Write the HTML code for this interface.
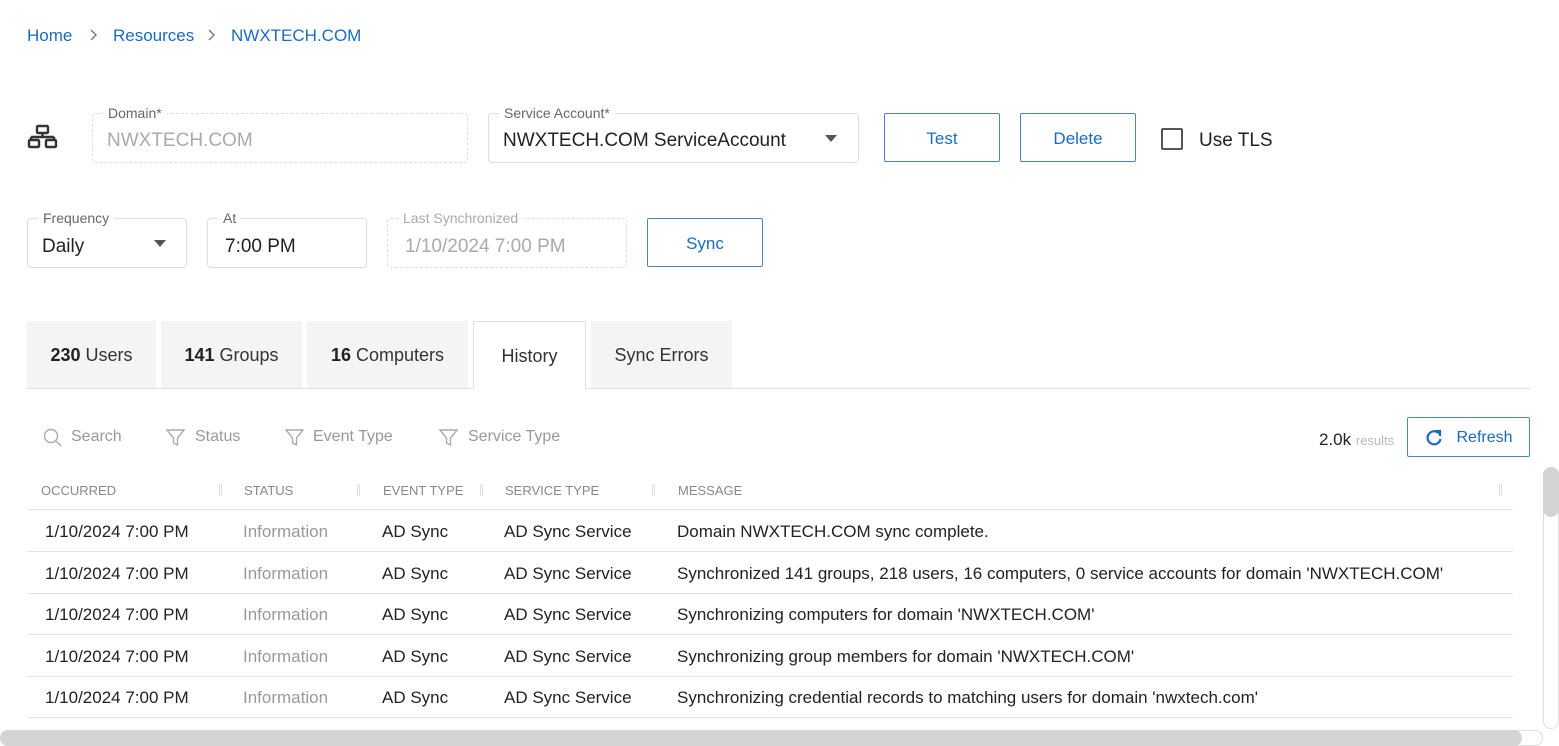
<!DOCTYPE html>
<html><head><meta charset="utf-8"><style>
*{box-sizing:border-box;margin:0;padding:0}
body{width:1559px;height:746px;overflow:hidden;background:#fff;font-family:"Liberation Sans",sans-serif;color:#222;position:relative}
.a{position:absolute;white-space:nowrap}
.blue{color:#1a6bbf}
.fld{position:absolute;border:1px solid #ddd;border-radius:4px}
.dash{border:1px dashed #ddd}
.lbl{position:absolute;top:-9px;left:10px;background:#fff;padding:0 5px;font-size:14px;color:#666}
.val{position:absolute;left:14px;font-size:19px}
.btn{position:absolute;border:1px solid #4a86c5;border-radius:2px;color:#1a6bbf;font-size:17px;display:flex;align-items:center;justify-content:center;background:#fff;padding-top:2px}
.tab{position:absolute;top:321px;height:67px;background:#f3f4f6;font-size:18px;display:flex;align-items:center;justify-content:center;color:#333;padding-top:2px}
.tab b{margin-right:5px;color:#222}
.flt{position:absolute;top:428px;font-size:16px;color:#999}
.th{position:absolute;top:483px;font-size:13px;color:#888}
.sep{position:absolute;top:484px;width:3px;height:12px;border-left:1px solid #ddd;border-right:1px solid #ddd}
.row{position:absolute;left:27px;width:1486px;height:1px;background:#e3e3e3}
.c{position:absolute;font-size:17px;color:#222}
.g{color:#999}
</style></head><body>
<div class="a blue" style="left:27px;top:26px;font-size:17px">Home</div>
<svg class="a" style="left:89px;top:28px" width="10" height="14" fill="none" stroke="#777" stroke-width="1.4"><path d="M2 2l5 5-5 5"/></svg>
<div class="a blue" style="left:113px;top:26px;font-size:17px">Resources</div>
<svg class="a" style="left:207px;top:28px" width="10" height="14" fill="none" stroke="#777" stroke-width="1.4"><path d="M2 2l5 5-5 5"/></svg>
<div class="a blue" style="left:231px;top:26px;font-size:17px">NWXTECH.COM</div>

<svg class="a" style="left:27px;top:124px" width="32" height="26" viewBox="0 0 32 26" fill="none" stroke="#333" stroke-width="2.4"><rect x="10" y="2" width="11" height="7" rx="1"/><path d="M15.5 9v4M4 13h23M4 13v3M27 13v3"/><rect x="2" y="16" width="10" height="7" rx="1"/><rect x="19" y="16" width="10" height="7" rx="1"/></svg>

<div class="fld dash" style="left:92px;top:113px;width:376px;height:50px"><span class="lbl">Domain*</span><span class="val" style="top:16px;color:#aaa">NWXTECH.COM</span></div>
<div class="fld" style="left:488px;top:113px;width:371px;height:50px"><span class="lbl">Service Account*</span><span class="val" style="top:16px">NWXTECH.COM ServiceAccount</span><span class="a" style="left:336px;top:21px;border:6px solid transparent;border-top:7px solid #555"></span></div>
<div class="btn" style="left:884px;top:113px;width:116px;height:49px">Test</div>
<div class="btn" style="left:1020px;top:113px;width:116px;height:49px">Delete</div>
<div class="a" style="left:1161px;top:128px;width:22px;height:22px;border:2px solid #555;border-radius:2px"></div>
<div class="a" style="left:1199px;top:130px;font-size:19px">Use TLS</div>

<div class="fld" style="left:27px;top:218px;width:160px;height:50px"><span class="lbl">Frequency</span><span class="val" style="top:17px">Daily</span><span class="a" style="left:126px;top:21px;border:6px solid transparent;border-top:7px solid #555"></span></div>
<div class="fld" style="left:207px;top:218px;width:160px;height:50px"><span class="lbl">At</span><span class="val" style="top:17px;left:17px">7:00 PM</span></div>
<div class="fld dash" style="left:387px;top:218px;width:240px;height:50px"><span class="lbl" style="color:#aaa">Last Synchronized</span><span class="val" style="top:17px;left:17px;color:#aaa">1/10/2024 7:00 PM</span></div>
<div class="btn" style="left:647px;top:218px;width:116px;height:49px">Sync</div>

<div class="a" style="left:27px;top:388px;width:1503px;height:1px;background:#e0e0e0"></div>
<div class="tab" style="left:27px;width:129px"><b>230</b>Users</div>
<div class="tab" style="left:161px;width:141px"><b>141</b>Groups</div>
<div class="tab" style="left:307px;width:161px"><b>16</b>Computers</div>
<div class="tab" style="left:473px;width:113px;background:#fff;border:1px solid #e0e0e0;border-bottom:1px solid #fff;height:68px">History</div>
<div class="tab" style="left:591px;width:141px">Sync Errors</div>

<svg class="a" style="left:43px;top:428px" width="20" height="20" fill="none" stroke="#aaa" stroke-width="1.4"><circle cx="8" cy="8" r="6.5"/><path d="M13 13l5 5"/></svg>
<div class="flt" style="left:71px">Search</div>
<svg class="a" style="left:166px;top:429px" width="20" height="18" fill="none" stroke="#aaa" stroke-width="1.4"><path d="M1 1h17l-6.5 8v7l-4-2v-5z"/></svg>
<div class="flt" style="left:195px">Status</div>
<svg class="a" style="left:285px;top:429px" width="20" height="18" fill="none" stroke="#aaa" stroke-width="1.4"><path d="M1 1h17l-6.5 8v7l-4-2v-5z"/></svg>
<div class="flt" style="left:313px">Event Type</div>
<svg class="a" style="left:439px;top:429px" width="20" height="18" fill="none" stroke="#aaa" stroke-width="1.4"><path d="M1 1h17l-6.5 8v7l-4-2v-5z"/></svg>
<div class="flt" style="left:468px">Service Type</div>

<div class="a" style="left:1319px;top:430px;font-size:17px">2.0k <span style="font-size:13px;color:#bbb">results</span></div>
<div class="btn" style="left:1407px;top:417px;width:123px;height:40px;font-size:16px"><svg width="20" height="20" viewBox="0 0 20 20" fill="none" stroke="#1a6bbf" stroke-width="2.2" style="margin-right:12px"><path d="M15 5.5A6.5 6.5 0 1 0 16.5 11"/><path d="M11 3h5v5" fill="none"/></svg>Refresh</div>

<div class="th" style="left:41px">OCCURRED</div><div class="sep" style="left:219px"></div>
<div class="th" style="left:244px">STATUS</div><div class="sep" style="left:357px"></div>
<div class="th" style="left:383px">EVENT TYPE</div><div class="sep" style="left:480px"></div>
<div class="th" style="left:505px">SERVICE TYPE</div><div class="sep" style="left:652px"></div>
<div class="th" style="left:678px">MESSAGE</div><div class="sep" style="left:1499px"></div>

<div class="row" style="top:509px"></div>
<div class="c" style="left:45px;top:522px">1/10/2024 7:00 PM</div><div class="c g" style="left:243px;top:522px">Information</div><div class="c" style="left:382px;top:522px">AD Sync</div><div class="c" style="left:504px;top:522px">AD Sync Service</div><div class="c" style="left:677px;top:522px">Domain NWXTECH.COM sync complete.</div>
<div class="row" style="top:551px"></div>
<div class="c" style="left:45px;top:564px">1/10/2024 7:00 PM</div><div class="c g" style="left:243px;top:564px">Information</div><div class="c" style="left:382px;top:564px">AD Sync</div><div class="c" style="left:504px;top:564px">AD Sync Service</div><div class="c" style="left:677px;top:564px">Synchronized 141 groups, 218 users, 16 computers, 0 service accounts for domain 'NWXTECH.COM'</div>
<div class="row" style="top:593px"></div>
<div class="c" style="left:45px;top:605px">1/10/2024 7:00 PM</div><div class="c g" style="left:243px;top:605px">Information</div><div class="c" style="left:382px;top:605px">AD Sync</div><div class="c" style="left:504px;top:605px">AD Sync Service</div><div class="c" style="left:677px;top:605px">Synchronizing computers for domain 'NWXTECH.COM'</div>
<div class="row" style="top:634px"></div>
<div class="c" style="left:45px;top:647px">1/10/2024 7:00 PM</div><div class="c g" style="left:243px;top:647px">Information</div><div class="c" style="left:382px;top:647px">AD Sync</div><div class="c" style="left:504px;top:647px">AD Sync Service</div><div class="c" style="left:677px;top:647px">Synchronizing group members for domain 'NWXTECH.COM'</div>
<div class="row" style="top:676px"></div>
<div class="c" style="left:45px;top:688px">1/10/2024 7:00 PM</div><div class="c g" style="left:243px;top:688px">Information</div><div class="c" style="left:382px;top:688px">AD Sync</div><div class="c" style="left:504px;top:688px">AD Sync Service</div><div class="c" style="left:677px;top:688px">Synchronizing credential records to matching users for domain 'nwxtech.com'</div>
<div class="row" style="top:717px"></div>

<div class="a" style="left:1543px;top:467px;width:16px;height:262px;border:1px solid #ddd;border-radius:8px"></div>
<div class="a" style="left:1543px;top:467px;width:16px;height:50px;background:#d4d4d4;border-radius:8px"></div>
<div class="a" style="left:0;top:730px;width:1543px;height:16px;border:1px solid #ddd;border-radius:8px"></div>
<div class="a" style="left:0;top:730px;width:1522px;height:16px;background:#d4d4d4;border-radius:8px"></div>
</body></html>
